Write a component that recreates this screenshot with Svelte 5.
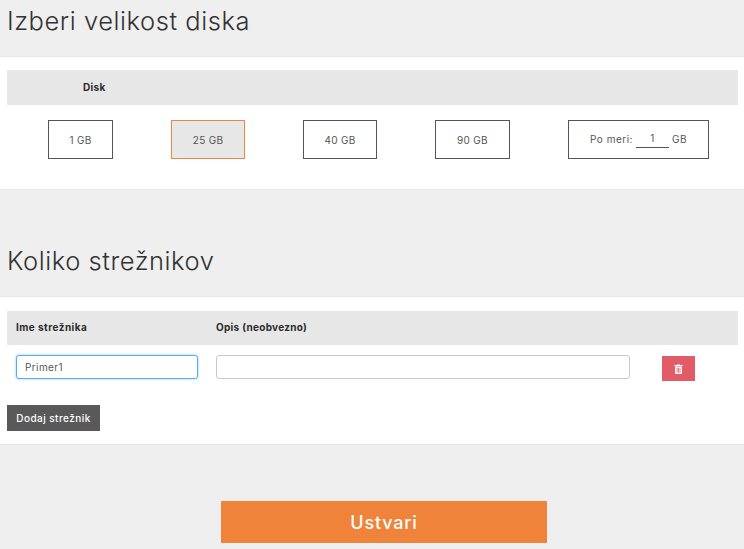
<script>
  const sizes = [
    { label: '1 GB', width: 65 },
    { label: '25 GB', width: 74, active: true },
    { label: '40 GB', width: 74 },
    { label: '90 GB', width: 75 }
  ];
</script>

<main class="page">
  <h2 class="title first">Izberi velikost diska</h2>
  <section class="panel disk">
    <div class="thead disk-head"><b>Disk</b></div>
    <div class="options">
      {#each sizes as s}
        <div class="opt" class:active={s.active} style="width:{s.width}px">{s.label}</div>
      {/each}
      <div class="opt custom">
        <span>Po meri:</span>
        <span class="num">1</span>
        <span>GB</span>
      </div>
    </div>
  </section>

  <h2 class="title second">Koliko strežnikov</h2>
  <section class="panel servers">
    <div class="thead srv-head">
      <b class="c1">Ime strežnika</b>
      <b>Opis (neobvezno)</b>
    </div>
    <div class="srv-row">
      <input class="name" value="Primer1" />
      <input class="desc" value="" />
      <button class="del" aria-label="Izbriši">
        <svg width="9" height="10" viewBox="0 0 9 10">
          <path d="M3 1V.4h3V1h2.700v1H.3V1z" fill="#fff"/>
          <path fill-rule="evenodd" d="M1 2.600h7V9a1 1 0 0 1-1 1H2a1 1 0 0 1-1-1zM2.600 3.800v5h.8v-5zm1.500 0v5h.8v-5zm1.500 0v5h.8v-5z" fill="#fff"/>
        </svg>
      </button>
    </div>
    <button class="add">Dodaj strežnik</button>
  </section>

  <div class="submit-wrap">
    <button class="submit">Ustvari</button>
  </div>
</main>

<style>
  :global(body) {
    margin: 0;
    background: #efefef;
  }
  .page {
    height: 549px;
    overflow: hidden;
    font-family: "Inter", "Liberation Sans", sans-serif;
    color: #333;
    font-size: 10px;
  }
  .title {
    margin: 0;
    padding-left: 7px;
    font-weight: 300;
    font-size: 25.500px;
    line-height: 32px;
    letter-spacing: 0.55px;
    color: #333;
  }
  .first { padding-top: 5px; padding-bottom: 19px; }
  .second { padding-top: 55px; padding-bottom: 19px; }
  .panel {
    background: #fff;
    border-top: 1px solid #e6e6e6;
    border-bottom: 1px solid #e6e6e6;
    box-sizing: border-box;
  }
  .disk { height: 134px; padding: 13px 6px 0 7px; }
  .servers { height: 149px; padding: 14px 6px 0 7px; margin-bottom: 56px; }
  .thead {
    background: #e7e7e7;
    display: flex;
    align-items: center;
    font-size: 10px;
    letter-spacing: 0.3px;
    color: #2b2b2b;
  }
  .thead b { font-weight: 700; }
  .disk-head { height: 35px; padding-left: 76px; padding-bottom: 2px; box-sizing: border-box; }
  .srv-head { height: 34px; padding-left: 9px; padding-bottom: 2px; box-sizing: border-box; }
  .c1 { width: 200px; letter-spacing: 0.45px; }
  .options {
    display: flex;
    gap: 58px;
    padding: 15px 0 0 41px;
  }
  .opt {
    height: 39px;
    box-sizing: border-box;
    border: 1px solid #555;
    display: flex;
    align-items: center;
    justify-content: center;
    color: #555;
    letter-spacing: 0.3px;
  }
  .opt.active {
    background: #e7e7e7;
    border-color: #f0843a;
  }
  .custom { width: 141px; gap: 3px; padding-bottom: 1px; letter-spacing: 0.5px; }
  .num {
    width: 33px;
    height: 18px;
    box-sizing: border-box;
    border-bottom: 1px solid #555;
    text-align: center;
    line-height: 16px;
  }
  .srv-row {
    display: flex;
    align-items: flex-start;
    padding: 10px 0 0 9px;
    height: 50px;
    box-sizing: border-box;
  }
  input {
    height: 24px;
    box-sizing: border-box;
    border-radius: 3px;
    background: #fff;
    font: 10px "Inter", "Liberation Sans", sans-serif;
    letter-spacing: 0.4px;
    color: #555;
    outline: none;
  }
  .name {
    width: 182px;
    margin-right: 18px;
    padding: 0 8px;
    border: 1px solid #5aaee8;
    box-shadow: 0 0 3px rgba(90, 174, 232, 0.6);
  }
  .desc {
    width: 414px;
    margin-right: 32px;
    border: 1px solid #c8c8c8;
  }
  .del {
    width: 33px;
    height: 25px;
    margin-top: 1px;
    background: #e25c68;
    border: 0;
    padding: 0;
    display: flex;
    align-items: center;
    justify-content: center;
  }
  .add {
    display: block;
    width: 93px;
    height: 26px;
    margin-top: 10px;
    background: #595959;
    border: 0;
    padding: 0;
    color: #fff;
    font: 500 10px "Inter", "Liberation Sans", sans-serif;
    letter-spacing: 0.45px;
  }
  .submit-wrap {
    display: flex;
    padding-left: 221px;
  }
  .submit {
    width: 326px;
    height: 42px;
    background: #ef8339;
    border: 0;
    padding: 0;
    color: #fff;
    font: 500 18px "Inter", "Liberation Sans", sans-serif;
    letter-spacing: 0.8px;
  }
</style>
